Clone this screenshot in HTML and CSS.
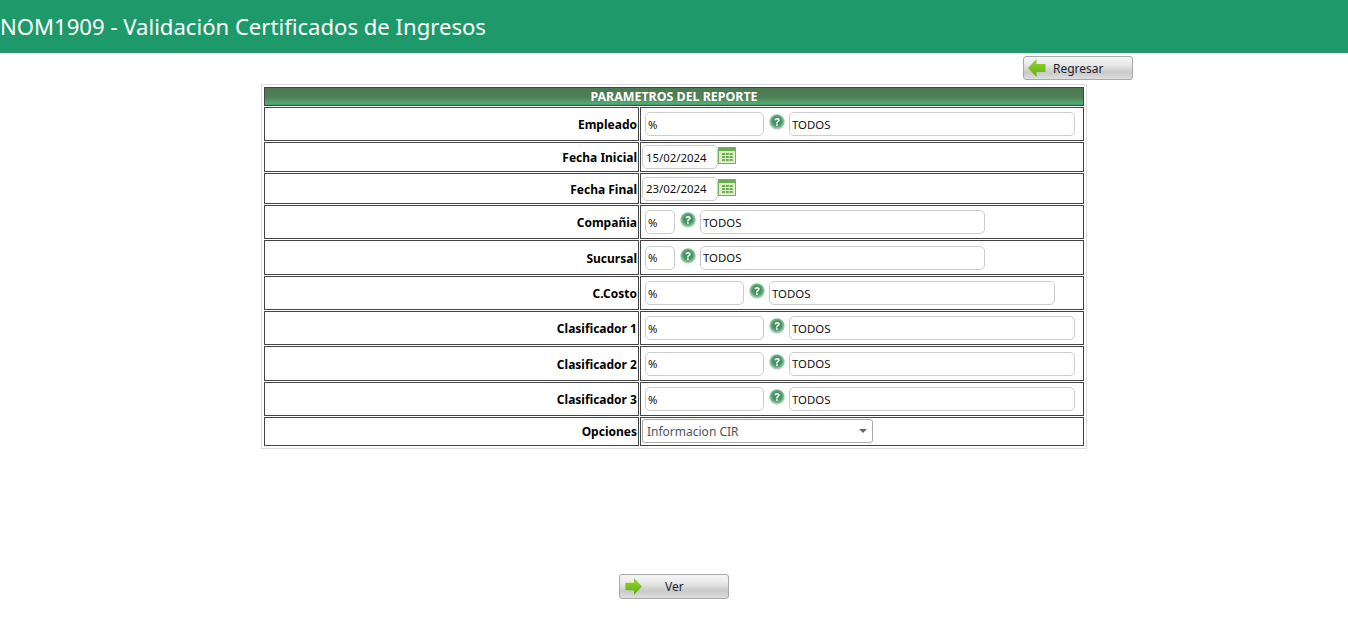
FILE: index.html
```html
<!DOCTYPE html>
<html lang="en">
<head>
    <meta charset="UTF-8">
    <meta name="viewport" content="width=device-width, initial-scale=1.0">
    <title>NOM1909</title>
    <link rel="stylesheet" href="styles.css">
</head>
<body>
    <svg class="defs" width="0" height="0">
        <defs>
            <radialGradient id="helpFill" cx="50%" cy="45%" r="55%">
                <stop offset="0" stop-color="#2f8a55"/>
                <stop offset="0.55" stop-color="#4a9a68"/>
                <stop offset="1" stop-color="#cfe3d5"/>
            </radialGradient>
            <linearGradient id="arrowFill" x1="0" y1="0" x2="0" y2="1">
                <stop offset="0" stop-color="#98d828"/>
                <stop offset="1" stop-color="#5eae12"/>
            </linearGradient>
            <symbol id="help" viewBox="0 0 16 16">
                <circle cx="8" cy="8" r="7.800" fill="url(#helpFill)"/>
                <path d="M5.400 6.100C5.600 4.600 6.700 3.900 8.100 3.900c1.500 0 2.600.9 2.600 2.200 0 1-.6 1.500-1.300 2-.6.4-.8.7-.8 1.400H7c0-1.100.3-1.700 1-2.200.6-.4.9-.7.9-1.100 0-.5-.4-.8-.9-.8-.6 0-1 .4-1.100 1zM7 10.300h1.700V12H7z" fill="#fff"/>
            </symbol>
            <symbol id="calendar" viewBox="0 0 18 17">
                <rect x="0.500" y="0.500" width="17" height="16" fill="#dcecc8" stroke="#7ab35f"/>
                <rect x="1" y="1" width="16" height="3" fill="#6aad4c"/>
                <path d="M4 6h3v2H4zM7.800 6h3v2h-3zM11.600 6h3v2h-3zM4 9h3v2H4zM7.800 9h3v2h-3zM11.600 9h3v2h-3zM4 12h3v2H4zM7.800 12h3v2h-3zM11.600 12h3v2h-3z" fill="#6aad4c"/>
            </symbol>
            <symbol id="arrow" viewBox="0 0 18 18">
                <path d="M9.500 0 18 9l-8.500 9v-5H.5V5h9z" fill="url(#arrowFill)"/>
            </symbol>
        </defs>
    </svg>

    <div class="titlebar">NOM1909 - Validación Certificados de Ingresos</div>

    <div class="toolbar">
        <button class="btn" type="button">
            <svg class="arrow-back"><use href="#arrow"/></svg>
            <span class="btn-text-back">Regresar</span>
        </button>
    </div>

    <!-- Parametros -->
    <table class="params">
        <colgroup>
            <col class="col-lbl">
            <col class="col-val">
        </colgroup>
        <tr class="h19"><th colspan="2">PARAMETROS DEL REPORTE</th></tr>
        <tr class="h34">
            <td class="lbl">Empleado</td>
            <td><div class="field">
                <input class="code-lg" type="text" value="%">
                <svg class="help"><use href="#help"/></svg>
                <input class="desc-lg" type="text" value="TODOS">
            </div></td>
        </tr>
        <tr class="h30">
            <td class="lbl">Fecha Inicial</td>
            <td><div class="field date">
                <input class="date-in" type="text" value="15/02/2024">
                <svg class="cal"><use href="#calendar"/></svg>
            </div></td>
        </tr>
        <tr class="h31">
            <td class="lbl">Fecha Final</td>
            <td><div class="field date">
                <input class="date-in" type="text" value="23/02/2024">
                <svg class="cal"><use href="#calendar"/></svg>
            </div></td>
        </tr>
        <tr class="h34">
            <td class="lbl">Compañia</td>
            <td><div class="field">
                <input class="code-sm" type="text" value="%">
                <svg class="help"><use href="#help"/></svg>
                <input class="desc-sm" type="text" value="TODOS">
            </div></td>
        </tr>
        <tr class="h35">
            <td class="lbl">Sucursal</td>
            <td><div class="field">
                <input class="code-sm" type="text" value="%">
                <svg class="help"><use href="#help"/></svg>
                <input class="desc-sm" type="text" value="TODOS">
            </div></td>
        </tr>
        <tr class="h34">
            <td class="lbl">C.Costo</td>
            <td><div class="field">
                <input class="code-md" type="text" value="%">
                <svg class="help"><use href="#help"/></svg>
                <input class="desc-md" type="text" value="TODOS">
            </div></td>
        </tr>
        <tr class="h34">
            <td class="lbl">Clasificador 1</td>
            <td><div class="field">
                <input class="code-lg" type="text" value="%">
                <svg class="help"><use href="#help"/></svg>
                <input class="desc-lg" type="text" value="TODOS">
            </div></td>
        </tr>
        <tr class="h35">
            <td class="lbl">Clasificador 2</td>
            <td><div class="field">
                <input class="code-lg" type="text" value="%">
                <svg class="help"><use href="#help"/></svg>
                <input class="desc-lg" type="text" value="TODOS">
            </div></td>
        </tr>
        <tr class="h34">
            <td class="lbl">Clasificador 3</td>
            <td><div class="field">
                <input class="code-lg" type="text" value="%">
                <svg class="help"><use href="#help"/></svg>
                <input class="desc-lg" type="text" value="TODOS">
            </div></td>
        </tr>
        <tr class="h29">
            <td class="lbl">Opciones</td>
            <td><div class="field date">
                <div class="select-wrap">
                    <select class="opciones"><option>Informacion CIR</option></select>
                </div>
            </div></td>
        </tr>
    </table>

    <div class="actions">
        <button class="btn btn-ver" type="button">
            <svg class="arrow-go"><use href="#arrow"/></svg>
            <span class="btn-text-go">Ver</span>
        </button>
    </div>
</body>
</html>
```

FILE: styles.css
```css
body {
    margin: 0;
    background: #fff;
    font-family: "Noto Sans", sans-serif;
    color: #000;
}
.defs {
    display: block;
    height: 0;
}
.titlebar {
    height: 53px;
    line-height: 53px;
    background: #1e9a6a;
    color: #fff;
    font-size: 22.100px;
    white-space: nowrap;
}
.toolbar {
    display: flex;
    justify-content: flex-end;
    height: 31px;
    padding: 3px 215px 0 0;
    box-sizing: border-box;
}
.btn {
    display: flex;
    align-items: center;
    width: 110px;
    height: 24px;
    padding: 0;
    border: 1px solid #a8a8a8;
    border-radius: 3px;
    background: linear-gradient(#f6f6f6 0%, #e8e8e8 35%, #c9c9c9 70%, #dedede 100%);
    font-family: "Noto Sans", sans-serif;
    font-size: 12px;
    color: #1c2530;
    box-sizing: border-box;
}
.btn-ver {
    height: 25px;
}
.arrow-back {
    width: 18px;
    height: 18px;
    flex: none;
    margin-left: 4px;
    transform: scaleX(-1);
}
.arrow-go {
    width: 17px;
    height: 17px;
    flex: none;
    margin-left: 5px;
}
.btn-text-back {
    margin-left: 7px;
}
.btn-text-go {
    margin-left: 23px;
}
.params {
    width: 826px;
    margin: 0 auto;
    padding: 1px;
    border: 1px solid #ddd;
    border-spacing: 1px;
    table-layout: fixed;
    box-sizing: border-box;
}
.col-lbl { width: 375px; }
.col-val { width: 444px; }
.params th {
    padding: 0;
    border: 1px solid #444;
    background: linear-gradient(#4c7a52 0%, #4f7f55 55%, #52ab72 90%, #4a9a68 100%);
    color: #fff;
    font-size: 12.400px;
    font-weight: bold;
    line-height: 14px;
}
.params td {
    padding: 0;
    border: 1px solid #444;
}
.params .lbl {
    padding-right: 1px;
    text-align: right;
    font-size: 12px;
    font-weight: bold;
}
.h19 { height: 19px; }
.h29 { height: 29px; }
.h30 { height: 30px; }
.h31 { height: 31px; }
.h34 { height: 34px; }
.h35 { height: 35px; }
.h31 .lbl,
.h35 .lbl {
    padding-top: 1px;
}
.field {
    display: flex;
    align-items: center;
    padding-left: 4px;
}
.field.date {
    padding-left: 1px;
}
input {
    height: 24px;
    margin: 0;
    padding: 0 2px;
    border: 1px solid #ccc;
    border-radius: 5px;
    background: #fff;
    font-family: "Noto Sans", sans-serif;
    font-size: 11.400px;
    color: #111;
    box-sizing: border-box;
}
.code-lg { width: 119px; }
.code-md { width: 99px; }
.code-sm { width: 30px; }
.desc-lg { width: 286px; }
.desc-md { width: 286px; }
.desc-sm { width: 285px; }
.date-in {
    width: 76px;
    padding-left: 3px;
}
.help {
    width: 16px;
    height: 16px;
    margin: 0 4px 4px 5px;
    flex: none;
}
.cal {
    width: 18px;
    height: 17px;
    margin-bottom: 3px;
    flex: none;
}
.select-wrap {
    position: relative;
    width: 231px;
    margin-bottom: 2px;
}
.select-wrap::after {
    content: "";
    position: absolute;
    top: 10px;
    right: 6px;
    border-style: solid;
    border-width: 4px 4px 0;
    border-color: #666 transparent transparent;
}
.opciones {
    display: block;
    width: 100%;
    height: 24px;
    padding: 1px 4px 0;
    border: 1px solid #aaa;
    border-radius: 3px;
    background: #fff;
    appearance: none;
    font-family: "Noto Sans", sans-serif;
    font-size: 12px;
    color: #4d5560;
}
.actions {
    display: flex;
    justify-content: center;
    padding-top: 125px;
}
```
